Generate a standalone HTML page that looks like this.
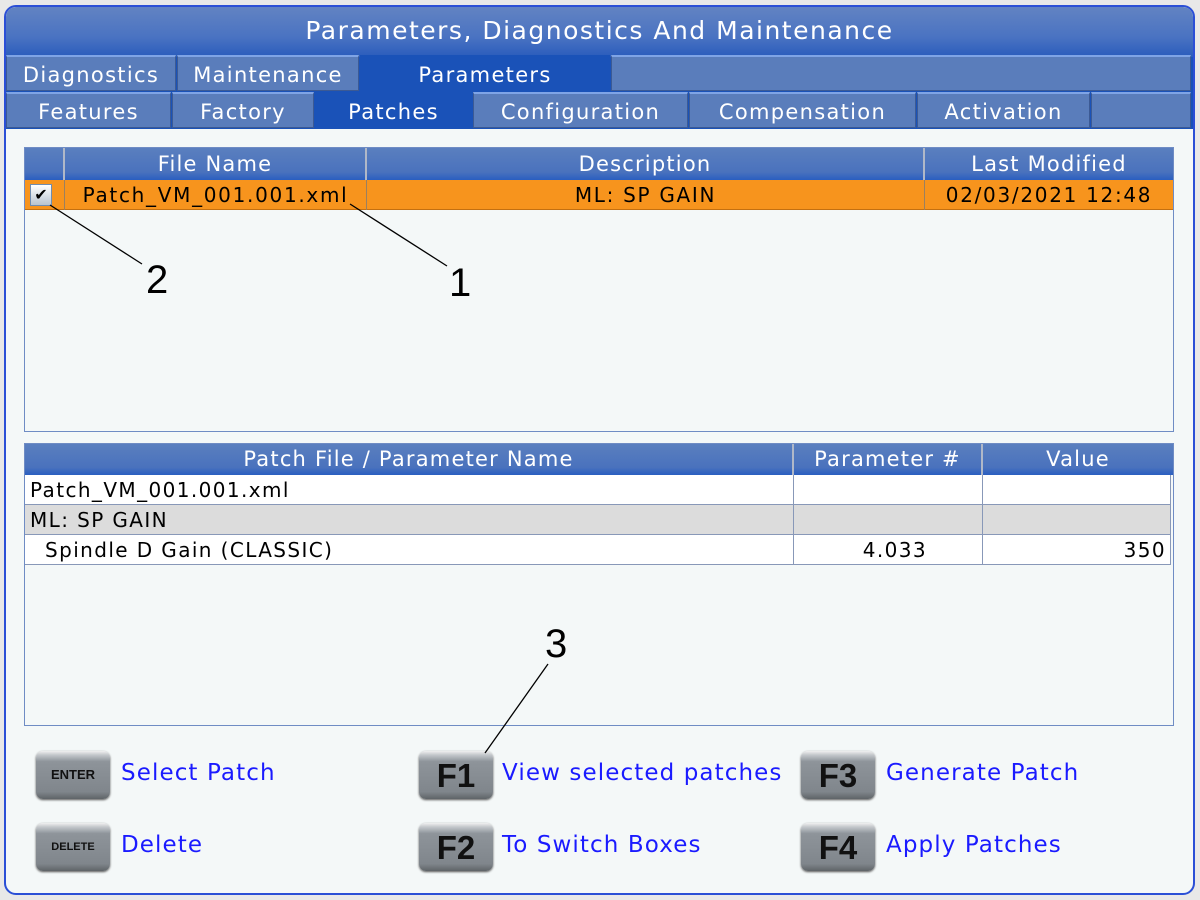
<!DOCTYPE html>
<html><head><style>
*{margin:0;padding:0;box-sizing:border-box}
body{width:1200px;height:900px;background:#e8e8e8;font-family:"DejaVu Sans","Liberation Sans",sans-serif;position:relative;overflow:hidden}
.abs{position:absolute}
#panel{left:4px;top:5px;width:1191px;height:890px;border:2px solid #2b4fd6;border-radius:12px;background:#f4f8f8;overflow:hidden}
#title{left:0;top:0;width:100%;height:50px;background:linear-gradient(#6283c2,#4a73c2 60%,#2a5cbc);color:#fff;font-size:25px;letter-spacing:1.5px;text-align:center;line-height:48px}
.tab{position:absolute;height:36px;background:#5a7dbb;border:1px solid #3c5a94;border-top:2px solid #7fa4e6;color:#fff;font-size:21px;letter-spacing:1.3px;text-align:center;line-height:36px}
.act{background:#1a52b8;border-color:#1a52b8}
.hdr{position:absolute;background:linear-gradient(#5a7fbf,#4a72bd 75%,#2a5ec0);color:#fff;font-size:21px;letter-spacing:1.2px;text-align:center;line-height:32px;border-right:2px solid #b0b8c8}
.cell{position:absolute;height:30px;font-size:20px;letter-spacing:1.4px;line-height:30px;color:#000;border-right:1px solid #8898b8;border-bottom:1px solid #8898b8;white-space:nowrap}
.key{position:absolute;width:74px;height:48px;border-radius:7px;background:linear-gradient(#f0f0f0 0,#c4c8cc 8%,#8e949a 22%,#80868c 85%,#5f6468);box-shadow:0 1px 2px #555;text-align:center;font-weight:bold;color:#111;font-family:"Liberation Sans",sans-serif}
.lbl{position:absolute;color:#1a1aff;font-size:23px;letter-spacing:1.1px}
.num{position:absolute;font-size:40px;font-family:"Liberation Sans",sans-serif;color:#000}
.tx{font-size:20px;letter-spacing:1.7px;line-height:30px;text-align:center}
</style></head><body>
<div id="panel" class="abs">
<div id="title" class="abs">Parameters, Diagnostics And Maintenance</div>
<div class="abs" style="left:0;top:50px;width:100%;height:72px;background:#1a52b8"></div>
</div>
<div class="tab" style="left:6px;top:55px;width:170px">Diagnostics</div>
<div class="tab" style="left:177px;top:55px;width:182px">Maintenance</div>
<div class="tab act" style="left:360px;top:55px;width:250px">Parameters</div>
<div class="tab" style="left:611px;top:55px;width:580px"></div>
<div class="tab" style="left:6px;top:92px;width:165px">Features</div>
<div class="tab" style="left:172px;top:92px;width:142px">Factory</div>
<div class="tab act" style="left:315px;top:92px;width:157px">Patches</div>
<div class="tab" style="left:473px;top:92px;width:215px">Configuration</div>
<div class="tab" style="left:689px;top:92px;width:227px">Compensation</div>
<div class="tab" style="left:917px;top:92px;width:173px">Activation</div>
<div class="tab" style="left:1091px;top:92px;width:100px"></div>

<div class="abs" style="left:24px;top:147px;width:1150px;height:285px;border:1px solid #6f8cc4;background:#f4f8f8"></div>
<div class="hdr" style="left:25px;top:148px;width:40px;height:32px"></div>
<div class="hdr" style="left:65px;top:148px;width:302px;height:32px">File Name</div>
<div class="hdr" style="left:367px;top:148px;width:558px;height:32px">Description</div>
<div class="hdr" style="left:925px;top:148px;width:248px;height:32px;border-right:none">Last Modified</div>
<div class="abs" style="left:25px;top:180px;width:1148px;height:30px;background:#f7941d;border-bottom:1px solid #c47010"></div>
<div class="abs" style="left:64px;top:180px;width:1px;height:30px;background:#9a8060"></div>
<div class="abs" style="left:366px;top:180px;width:1px;height:30px;background:#9a8060"></div>
<div class="abs" style="left:924px;top:180px;width:1px;height:30px;background:#9a8060"></div>
<div class="abs" style="left:30px;top:184px;width:22px;height:22px;background:linear-gradient(#fff,#b8c4d0);border:1px solid #6f8cb0;font-size:16px;line-height:20px;text-align:center;font-weight:bold">✔</div>
<div class="abs tx" style="left:65px;top:180px;width:301px">Patch_VM_001.001.xml</div>
<div class="abs tx" style="left:367px;top:180px;width:557px">ML: SP GAIN</div>
<div class="abs tx" style="left:925px;top:180px;width:248px">02/03/2021 12:48</div>

<div class="abs" style="left:24px;top:443px;width:1150px;height:283px;border:1px solid #6f8cc4;background:#f4f8f8"></div>
<div class="hdr" style="left:25px;top:444px;width:769px;height:31px;line-height:31px">Patch File / Parameter Name</div>
<div class="hdr" style="left:794px;top:444px;width:189px;height:31px;line-height:31px">Parameter #</div>
<div class="hdr" style="left:983px;top:444px;width:190px;height:31px;line-height:31px;border-right:none">Value</div>
<div class="abs" style="left:25px;top:475px;width:1146px;height:30px;background:#fff"></div>
<div class="abs" style="left:25px;top:505px;width:1146px;height:30px;background:#dcdcdc"></div>
<div class="abs" style="left:25px;top:535px;width:1146px;height:30px;background:#fff"></div>
<div class="cell" style="left:25px;top:475px;width:769px;padding-left:5px">Patch_VM_001.001.xml</div>
<div class="cell" style="left:794px;top:475px;width:189px"></div>
<div class="cell" style="left:983px;top:475px;width:188px"></div>
<div class="cell" style="left:25px;top:505px;width:769px;padding-left:5px">ML: SP GAIN</div>
<div class="cell" style="left:794px;top:505px;width:189px"></div>
<div class="cell" style="left:983px;top:505px;width:188px"></div>
<div class="cell" style="left:25px;top:535px;width:769px;padding-left:20px">Spindle D Gain (CLASSIC)</div>
<div class="cell" style="left:794px;top:535px;width:189px;text-align:right;padding-right:55px">4.033</div>
<div class="cell" style="left:983px;top:535px;width:188px;text-align:right;padding-right:4px">350</div>

<div class="key" style="left:36px;top:751px;font-size:13px;line-height:48px">ENTER</div>
<div class="lbl" style="left:121px;top:760px">Select Patch</div>
<div class="key" style="left:36px;top:823px;font-size:11px;line-height:48px">DELETE</div>
<div class="lbl" style="left:121px;top:832px">Delete</div>
<div class="key" style="left:419px;top:751px;font-size:33px;line-height:50px">F1</div>
<div class="lbl" style="left:502px;top:760px">View selected patches</div>
<div class="key" style="left:419px;top:823px;font-size:33px;line-height:50px">F2</div>
<div class="lbl" style="left:502px;top:832px">To Switch Boxes</div>
<div class="key" style="left:801px;top:751px;font-size:33px;line-height:50px">F3</div>
<div class="lbl" style="left:886px;top:760px">Generate Patch</div>
<div class="key" style="left:801px;top:823px;font-size:33px;line-height:50px">F4</div>
<div class="lbl" style="left:886px;top:832px">Apply Patches</div>

<svg class="abs" style="left:0;top:0" width="1200" height="900">
<line x1="50" y1="205" x2="142" y2="264" stroke="#000" stroke-width="1.3"/>
<line x1="350" y1="204" x2="447" y2="266" stroke="#000" stroke-width="1.3"/>
<line x1="485" y1="753" x2="548" y2="664" stroke="#000" stroke-width="1.3"/>
</svg>
<div class="num" style="left:146px;top:258px">2</div>
<div class="num" style="left:449px;top:261px">1</div>
<div class="num" style="left:545px;top:622px">3</div>
</body></html>
